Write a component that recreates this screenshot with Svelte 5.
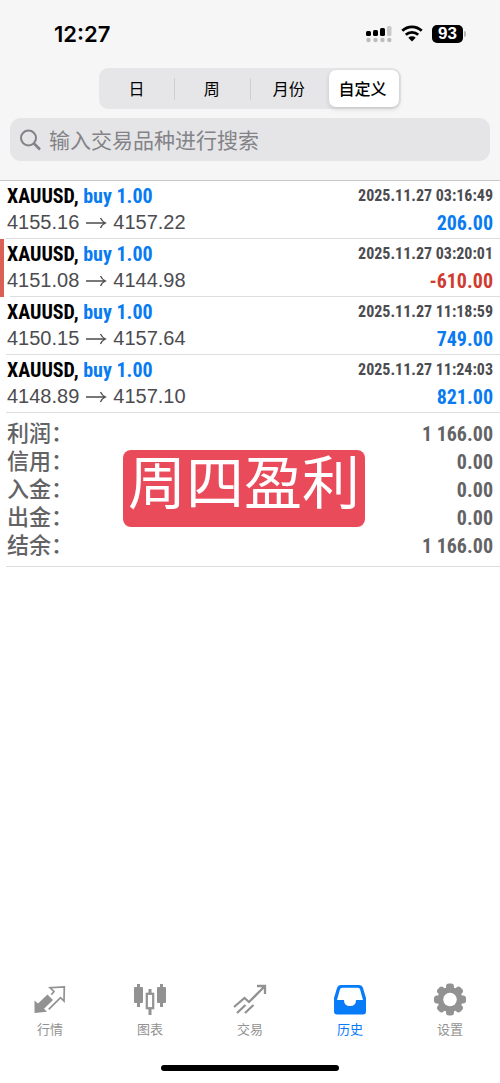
<script>
	let periods = ["日", "周", "月份", "自定义"];
	let period = $state("自定义");

	let deals = [
		{ open: "4155.16", close: "4157.22", time: "2025.11.27 03:16:49", profit: "206.00" },
		{ open: "4151.08", close: "4144.98", time: "2025.11.27 03:20:01", profit: "-610.00" },
		{ open: "4150.15", close: "4157.64", time: "2025.11.27 11:18:59", profit: "749.00" },
		{ open: "4148.89", close: "4157.10", time: "2025.11.27 11:24:03", profit: "821.00" }
	];

	let totals = [
		["利润", "1 166.00"],
		["信用", "0.00"],
		["入金", "0.00"],
		["出金", "0.00"],
		["结余", "1 166.00"]
	];

	let tabs = [
		{ id: "quotes", name: "行情" },
		{ id: "charts", name: "图表" },
		{ id: "trade", name: "交易" },
		{ id: "history", name: "历史" },
		{ id: "settings", name: "设置" }
	];
	let active = "history";

	function is_loss(deal){
		return deal.profit.startsWith("-");
	}
</script>

<div class="screen">
	<header>
		<div class="status">
			<span class="clock">12:27</span>
			<div class="status-icons">
				<svg width="26" height="18" viewBox="0 0 26 18">
					<g fill="#000">
						<rect x="0" y="6" width="5" height="5" rx="1.5" />
						<rect x="7" y="5" width="5" height="6" rx="1.5" />
						<rect x="14" y="3" width="5" height="8" rx="1.5" />
					</g>
					<rect x="21" y="1" width="4.5" height="10" rx="1.5" fill="#c9c9ca" />
					<g fill="#bcbcbd">
						<circle cx="2.5" cy="15" r="2.2" />
						<circle cx="9.5" cy="15" r="2.2" />
						<circle cx="16.5" cy="15" r="2.2" />
						<circle cx="23.3" cy="15" r="2.2" />
					</g>
				</svg>
				<svg width="22" height="17" viewBox="0 0 22 17">
					<g fill="none" stroke="#000" stroke-width="2.8">
						<path d="M1.3 5.7a14 14 0 0 1 19.4 0" />
						<path d="M4.8 9.8a9 9 0 0 1 12.4 0" />
					</g>
					<path d="M7.3 12.8a5.5 5.5 0 0 1 7.4 0L11 16.6z" />
				</svg>
				<div class="battery"><span class="level">93</span><span class="cap"></span></div>
			</div>
		</div>

		<div class="periods">
			{#each periods as p}
				<button class="period" class:selected={p == period} onclick={() => period = p}>{p}</button>
			{/each}
		</div>

		<label class="search">
			<svg width="22" height="22" viewBox="0 0 22 22" fill="none" stroke="#838387" stroke-width="2">
				<circle cx="8.5" cy="9" r="7.5" />
				<path d="M14 14.5l6 6" stroke-width="2.5" />
			</svg>
			<input type="text" placeholder="输入交易品种进行搜索" aria-label="输入交易品种进行搜索">
		</label>
	</header>

	<main>
		{#each deals as d}
			<div class="deal" class:loss={is_loss(d)}>
				<div class="line">
					<span class="symbol">XAUUSD, <span class="side">buy 1.00</span></span>
					<span class="time">{d.time}</span>
				</div>
				<div class="line">
					<span class="prices">
						{d.open}
						<svg width="22" height="12" viewBox="0 0 22 12" fill="none" stroke="#4c4c50" stroke-width="1.3">
							<path d="M1 6h19.5M15.5 1q1.500 3.500 5 5q-3.500 1.500-5 5" />
						</svg>
						{d.close}
					</span>
					<span class="profit">{d.profit}</span>
				</div>
			</div>
		{/each}

		<div class="totals">
			<dl>
				{#each totals as [name, value]}
					<div class="total">
						<dt>{name}：</dt>
						<dd>{value}</dd>
					</div>
				{/each}
			</dl>
			<div class="stamp">周四盈利</div>
		</div>
	</main>

	<nav>
		{#each tabs as t}
			<a href="#{t.id}" class="tab" class:active={t.id == active}>
				<svg width="36" height="36" viewBox="0 0 36 36">
					{#if t.id == "quotes"}
						<path fill="currentColor" d="M2.5 32V19.5l3.500 3 9.500-9 5.500 5.500-9 8.700 3 3z" />
						<path fill="none" stroke="currentColor" stroke-width="1.7" d="M19.3 13.8l2.700-3.300-4-3.800 14.300-.7-.3 14-3.500-3.300L16.7 28.3" />
					{:else if t.id == "charts"}
						<g fill="currentColor">
							<rect x="2" y="6" width="9" height="16" rx="1" />
							<rect x="5" y="3" width="3" height="23" />
							<rect x="25" y="6" width="9" height="16" rx="1" />
							<rect x="28" y="3" width="3" height="23" />
							<rect x="16.5" y="8" width="3" height="5" />
							<rect x="16.5" y="28" width="3" height="6" />
						</g>
						<rect x="14.8" y="12.8" width="6.4" height="14.4" fill="none" stroke="currentColor" stroke-width="2.2" />
					{:else if t.id == "trade"}
						<path fill="none" stroke="currentColor" stroke-width="2.3" d="M2 26l10.500-9 4.500 4L32 6M5 32l8.500-8M13 32l8.500-8M25 5h8v8" />
					{:else if t.id == "history"}
						<path fill="currentColor" fill-rule="evenodd" d="M9 4h18q3 0 4 3l3 10v13.500q0 3-3 3H5q-3 0-3-3V17L5 7q1-3 4-3zM10 6.700q-1.500 0-2 1.500L5 19h7q0 6 6 6t6-6h7L28 8.200q-.5-1.500-2-1.500z" />
					{:else}
						<g fill="currentColor">
							<circle cx="18" cy="18.5" r="12.5" />
							{#each [0, 45, 90, 135] as angle}
								<rect x="14" y="2.5" width="8" height="32" rx="3" transform="rotate({angle} 18 18.5)" />
							{/each}
						</g>
						<circle cx="18" cy="18.5" r="6.8" fill="#fff" />
					{/if}
				</svg>
				{t.name}
			</a>
		{/each}
	</nav>
	<div class="home"></div>
</div>

<style>
	:global(body) {
		margin: 0;
		background: #fff;
	}

	.screen {
		display: flex;
		flex-direction: column;
		min-height: 100vh;
		font-family: "Liberation Sans", "Noto Sans CJK SC", sans-serif;
		background: #fff;
	}

	header {
		display: flex;
		flex-direction: column;
		padding: 20px 10px 19px;
		border-bottom: 1px solid #c8c8ca;
		background: #f6f6f6;
	}

	.status {
		display: flex;
		justify-content: space-between;
		align-items: center;
		height: 27px;
		padding: 0 24px 0 44px;
	}

	.clock {
		font: 600 22px Inter, sans-serif;
	}

	.status-icons {
		display: flex;
		align-items: center;
		gap: 9px;
	}

	.battery {
		display: flex;
		align-items: center;
		gap: 1px;
	}

	.level {
		width: 31px;
		border-radius: 5px;
		background: #000;
		color: #fff;
		font: bold 17px/18px "Liberation Sans", sans-serif;
		text-align: center;
	}

	.cap {
		width: 2px;
		height: 6px;
		border-radius: 0 2px 2px 0;
		background: #b5b5b7;
	}

	.periods {
		display: grid;
		grid-template-columns: 74fr 76fr 77fr 70fr;
		align-self: center;
		width: 63%;
		box-sizing: border-box;
		height: 41px;
		margin-top: 21px;
		padding: 2px;
		border-radius: 9px;
		background: #e6e6e8;
	}

	.period {
		padding: 0 3px 2px 0;
		border: 0;
		background: linear-gradient(#cfcfd2, #cfcfd2) right center / 1px 22px no-repeat;
		color: #000;
		font: 16px "Noto Sans CJK SC", sans-serif;
	}

	.period:nth-child(3) {
		background: none;
	}

	.selected {
		border-radius: 7px;
		background: #fff;
		box-shadow: 0 2px 5px rgba(0, 0, 0, 0.14);
		font-weight: 500;
	}

	.search {
		display: flex;
		align-items: center;
		gap: 7px;
		height: 43px;
		margin-top: 9px;
		padding: 0 10px;
		border-radius: 11px;
		background: #e5e5e7;
	}

	input {
		flex: 1;
		min-width: 0;
		padding: 0 0 2px;
		border: 0;
		outline: 0;
		background: none;
		font: 21px "Noto Sans CJK SC", sans-serif;
	}

	input::placeholder {
		color: #838387;
	}

	main {
		flex: 1;
	}

	.deal {
		display: flex;
		flex-direction: column;
		box-sizing: border-box;
		height: 58px;
		padding: 1px 7px 0;
		background: linear-gradient(#dedee0, #dedee0) 6px bottom / 100% 1px no-repeat;
	}

	.loss {
		padding-left: 3px;
		border-left: 4px solid #da5f55;
	}

	.line {
		display: flex;
		justify-content: space-between;
		align-items: center;
		height: 27px;
		white-space: nowrap;
	}

	.symbol, .profit, dd {
		font: bold 20px "Roboto Condensed", Roboto, sans-serif;
	}

	.side, .profit {
		color: #087bf2;
	}

	.loss .profit {
		color: #d03b30;
	}

	.time {
		color: #4c4c50;
		font: bold 16px "Roboto Condensed", Roboto, sans-serif;
	}

	.prices {
		display: flex;
		align-items: center;
		gap: 6px;
		color: #4c4c50;
		font-size: 20px;
	}

	.totals {
		position: relative;
		padding: 7px;
		background: linear-gradient(#dedee0, #dedee0) 6px bottom / 100% 1px no-repeat;
	}

	dl {
		margin: 0;
	}

	.total {
		display: flex;
		justify-content: space-between;
		align-items: center;
		height: 28px;
		color: #636366;
	}

	dt {
		font: 500 22px/28px "Liberation Sans", "Noto Sans CJK SC", sans-serif;
	}

	dd {
		margin: 0;
	}

	/* label pinned over the totals */
	.stamp {
		position: absolute;
		top: 37px;
		left: 123px;
		width: 242px;
		height: 77px;
		border-radius: 8px;
		background: #e94b5b;
		color: #fff;
		font: 58px/58px "Noto Sans CJK SC", sans-serif;
		text-align: center;
	}

	nav {
		display: grid;
		grid-template-columns: repeat(5, 1fr);
	}

	.tab {
		display: flex;
		flex-direction: column;
		align-items: center;
		gap: 2px;
		color: #929292;
		font: 13px/20px "Noto Sans CJK SC", sans-serif;
		text-decoration: none;
	}

	.active {
		color: #087bf8;
	}

	.home {
		align-self: center;
		width: 178px;
		height: 6px;
		margin: 26px 0 12px;
		border-radius: 3px;
		background: #000;
	}
</style>
